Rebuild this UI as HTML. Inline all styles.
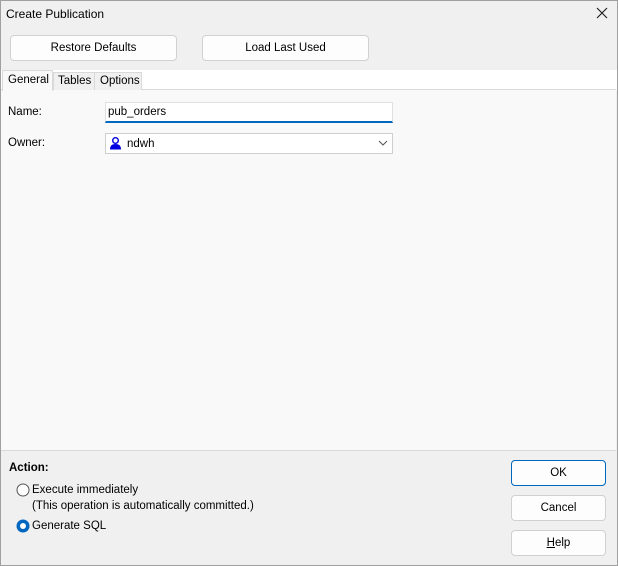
<!DOCTYPE html>
<html><head><style>
*{box-sizing:border-box;margin:0;padding:0}
body{width:618px;height:566px;background:#f0f0f0;font-family:"Liberation Sans",sans-serif;font-size:11.5px;color:#000;position:relative;overflow:hidden}
.abs{position:absolute}
.win{left:0;top:0;width:618px;height:566px;border:1px solid #a0a0a0}
.btn{position:absolute;background:#fdfdfd;border:1px solid #d0d0d0;border-radius:4px;text-align:center;font-size:11.5px}
</style></head><body>
<div class="abs win"></div>
<div class="abs" style="left:6px;top:7px;font-size:12px">Create Publication</div>
<svg class="abs" style="left:596px;top:7px" width="12" height="12"><path d="M1 1l10 10M11 1L1 11" stroke="#222" stroke-width="1.2"/></svg>
<div class="btn" style="left:10px;top:35px;width:167px;height:26px;line-height:24px">Restore Defaults</div>
<div class="btn" style="left:202px;top:35px;width:167px;height:26px;line-height:24px">Load Last Used</div>
<div class="abs" style="left:1px;top:70px;width:616px;height:20px;background:#fff"></div>
<div class="abs" style="left:1px;top:89px;width:615px;height:362px;background:#f9f9f9;border-top:1px solid #d9d9d9;border-bottom:1px solid #d9d9d9"></div>
<div class="abs" style="left:2px;top:70px;width:51px;height:21px;background:#f9f9f9;border:1px solid #d9d9d9;border-bottom:none;padding:3px 0 0 5px">General</div>
<div class="abs" style="left:53px;top:72px;width:42px;height:18px;background:#f0f0f0;border:1px solid #d9d9d9;border-bottom:none;padding:2px 0 0 4px">Tables</div>
<div class="abs" style="left:95px;top:72px;width:47px;height:18px;background:#f0f0f0;border:1px solid #d9d9d9;border-bottom:none;border-left:none;padding:2px 0 0 5px">Options</div>
<div class="abs" style="left:8px;top:106px">Name:</div>
<div class="abs" style="left:105px;top:102px;width:288px;height:21px;background:#fff;border:1px solid #e0e0e0;border-bottom:2px solid #0067c0;padding:3px 0 0 2px">pub_orders</div>
<div class="abs" style="left:8px;top:137px">Owner:</div>
<div class="abs" style="left:105px;top:133px;width:288px;height:21px;background:#fff;border:1px solid #cfcfcf;padding:4px 0 0 21px">ndwh</div>
<svg class="abs" style="left:109px;top:137px" width="13" height="13" viewBox="0 0 13 13"><circle cx="6.5" cy="3.5" r="2.8" fill="none" stroke="#0000e0" stroke-width="1.4"/><path d="M1 12.5 Q1 7 6.5 7 Q12 7 12 12.5Z" fill="#0000e0"/></svg>
<svg class="abs" style="left:378px;top:140px" width="10" height="7"><path d="M1 1l4 4 4-4" stroke="#555" fill="none"/></svg>
<div class="abs" style="left:9px;top:462px;font-weight:bold">Action:</div>
<svg class="abs" style="left:16px;top:483px" width="14" height="14"><circle cx="7" cy="7" r="6" fill="#fff" stroke="#555"/></svg>
<div class="abs" style="left:32px;top:484px">Execute immediately</div>
<div class="abs" style="left:32px;top:500px">(This operation is automatically committed.)</div>
<svg class="abs" style="left:16px;top:519px" width="14" height="14"><circle cx="7" cy="7" r="6.5" fill="#0067c0"/><circle cx="7" cy="7" r="3" fill="#fff"/></svg>
<div class="abs" style="left:32px;top:520px">Generate SQL</div>
<div class="btn" style="left:511px;top:460px;width:95px;height:26px;line-height:24px;border-color:#0067c0">OK</div>
<div class="btn" style="left:511px;top:495px;width:95px;height:26px;line-height:24px">Cancel</div>
<div class="btn" style="left:511px;top:530px;width:95px;height:26px;line-height:24px"><u>H</u>elp</div>
</body></html>
